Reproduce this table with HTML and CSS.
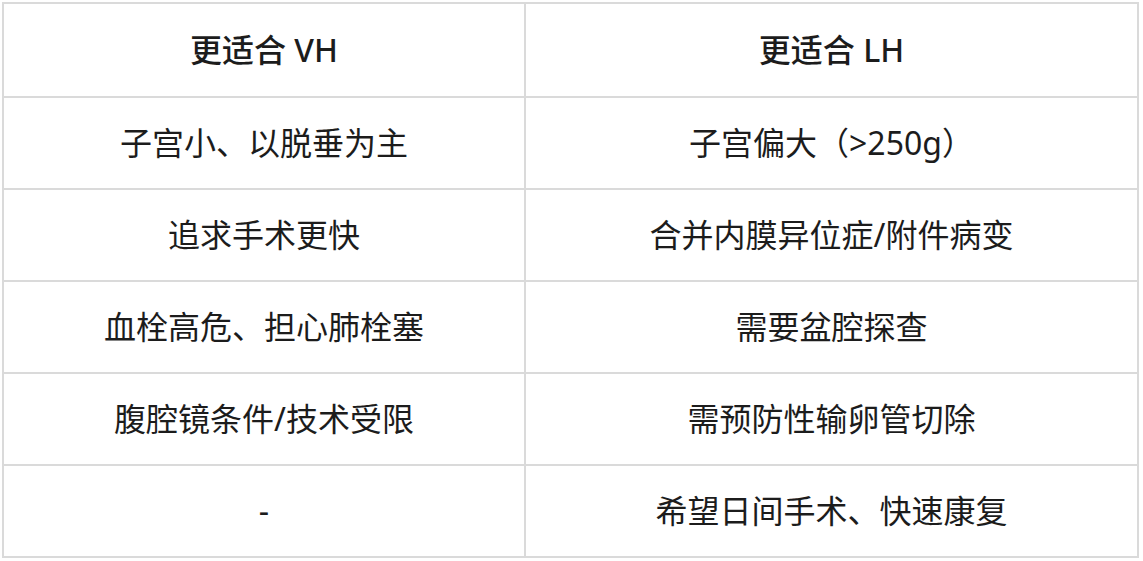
FILE: index.html
```html
<!DOCTYPE html>
<html lang="zh-CN">
<head>
<meta charset="utf-8">
<link rel="stylesheet" href="styles.css">
</head>
<body>
<table class="cmp">
  <colgroup><col class="c1"><col class="c2"></colgroup>
  <thead>
    <tr><th>更适合 VH</th><th>更适合 LH</th></tr>
  </thead>
  <tbody>
    <tr><td>子宫小、以脱垂为主</td><td>子宫偏大（&gt;250g）</td></tr>
    <tr><td>追求手术更快</td><td>合并内膜异位症/附件病变</td></tr>
    <tr><td>血栓高危、担心肺栓塞</td><td>需要盆腔探查</td></tr>
    <tr><td>腹腔镜条件/技术受限</td><td>需预防性输卵管切除</td></tr>
    <tr><td>-</td><td>希望日间手术、快速康复</td></tr>
  </tbody>
</table>
</body>
</html>
```
FILE: styles.css
```css
html, body {
  margin: 0;
  padding: 0;
  background: #ffffff;
}
body {
  padding: 2px;
  font-family: "Noto Sans", "Noto Sans CJK SC", sans-serif;
  color: #1c1c1c;
}
.cmp {
  border-collapse: collapse;
  width: 1137px;
  table-layout: fixed;
}
.c1 { width: 522px; }
.cmp th, .cmp td {
  border: 2px solid #dadada;
  height: 90px;
  padding: 0;
  text-align: center;
  vertical-align: middle;
  font-size: 32px;
  line-height: 40px;
}
.cmp th {
  font-weight: 500;
  height: 92px;
}
.cmp td {
  font-weight: 400;
}
```
